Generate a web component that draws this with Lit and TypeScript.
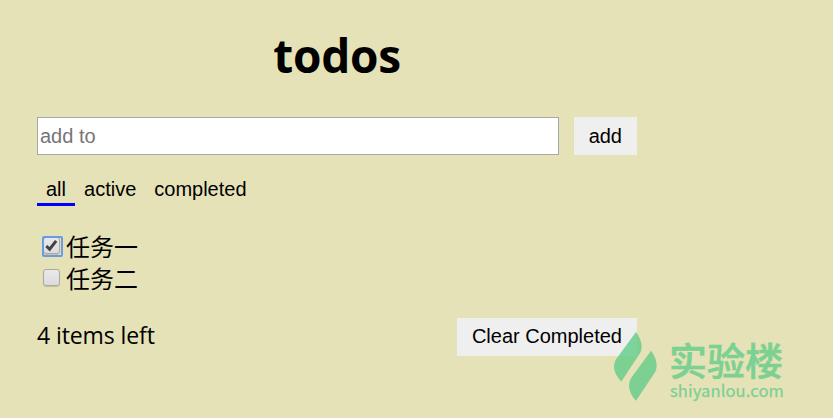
import { LitElement, html, css } from "lit";
import { customElement, state } from "lit/decorators.js";
import { classMap } from "lit/directives/class-map.js";

@customElement("site-mark")
class SiteMark extends LitElement {
  static styles = css`
    :host { display: flex; width: 172px; height: 74px; color: #62cd89; opacity: 0.8; pointer-events: none; }
    .leaf { flex: none; width: 43px; height: 70px; fill: currentColor; }
    .words { display: flex; flex-direction: column; margin-left: 12px; padding-top: 7px; white-space: nowrap; }
    .name { font: 500 38px/40px "Noto Sans CJK SC", sans-serif; -webkit-text-stroke: 0.6px currentColor; }
    .url { font: 400 16.5px/20px "Noto Sans CJK SC", sans-serif; -webkit-text-stroke: 0.25px currentColor; letter-spacing: 0.13px; margin: 1px 0 0 1px; }
  `;
  render() {
    return html`
      <svg class="leaf" viewBox="0 0 43 70">
        <path d="M22 0C25 3.5 27.3 9 27.6 14C27.7 17 27.2 19.3 25.8 21.5L7.2 49.7C3.5 45.5 0 40 0 35C0 32 0.8 29 2.6 26.5Z" />
        <path d="M37 18.7C40 22.5 42.6 28 42.6 33.5C42.6 36.5 42 38.7 40.5 41L22 68.8C18.5 65 15 59.5 15 54C15 51 15.8 48 17.5 45.5Z" />
      </svg>
      <div class="words">
        <span class="name">实验楼</span>
        <span class="url">shiyanlou.com</span>
      </div>
    `;
  }
}

@customElement("app-root")
class AppRoot extends LitElement {
  static styles = css`
    * { box-sizing: border-box; }
    :host {
      display: block; position: relative; height: 418px; overflow: hidden;
      background: #e6e2b7; color: #000; font: 24px "Open Sans", "Noto Sans CJK SC", sans-serif;
    }
    .app { width: 600px; margin-left: 37px; padding-top: 23px; }
    h1 { margin: 0; font: 700 46px/64px "Open Sans", sans-serif; text-align: center; letter-spacing: -0.3px; }
    .entry { display: flex; justify-content: space-between; margin-top: 30px; }
    button, input { font: 20px "Liberation Sans", Arial, sans-serif; margin: 0; outline: none; color: #000; }
    .field { width: 522px; height: 38px; border: 1px solid #a9a9a9; padding: 1px 2px; background: #fff; }
    .field::placeholder { color: #757575; opacity: 1; }
    .action { height: 38px; border: 0; padding: 1px 15px; background: #efefef; }
    .tabs { display: flex; margin-top: 17px; }
    .tab { height: 34px; border: 0; border-bottom: 3px solid transparent; padding: 4px 9px 1px; background: none; }
    .tab.on { border-bottom-color: #0000ff; }
    .list { display: flex; flex-direction: column; margin: 24px 0 0; padding: 0; list-style: none; }
    .item { display: flex; height: 32px; padding-left: 6px; }
    .box {
      display: flex; flex: none; position: relative; width: 17px; height: 17px; margin: 7px 6px 0 0;
      border: 1px solid #a8a8a5; border-radius: 3px; background: linear-gradient(#e9e9e9, #dcdcdc);
      box-shadow: 0 1px 1px rgba(0, 0, 0, 0.14);
    }
    .box.focus::after {
      content: ""; box-sizing: border-box; position: absolute; left: -2px; top: -2px; width: 21px; height: 21px;
      border: 2px solid #699bea; border-radius: 2px;
    }
    .tick { width: 15px; height: 15px; fill: none; stroke: #424242; stroke-width: 3.2; }
    .label { font: 24px/32px "Noto Sans CJK SC", sans-serif; }
    .foot { display: flex; justify-content: space-between; height: 38px; margin-top: 24px; }
    .foot .action { padding: 0 15px 2px; }
    .count { font: 23px/35px "Open Sans", sans-serif; letter-spacing: -0.1px; }
    .mark { position: absolute; left: 614px; top: 332px; }
  `;

  @state() filter = "all";
  @state() items = [
    { title: "任务一", done: true },
    { title: "任务二", done: false },
  ];

  toggle(index: number) {
    this.items = this.items.map((t, i) => (i === index ? { ...t, done: !t.done } : t));
  }

  render() {
    return html`
      <main class="app">
        <h1>todos</h1>
        <div class="entry">
          <input class="field" placeholder="add to" />
          <button class="action">add</button>
        </div>
        <nav class="tabs">
          ${["all", "active", "completed"].map(
            (name) => html`<button class=${classMap({ tab: true, on: this.filter === name })}
              @click=${() => (this.filter = name)}>${name}</button>`
          )}
        </nav>
        <ul class="list">
          ${this.items.map(
            (item, i) => html`<li class="item" @click=${() => this.toggle(i)}>
              <span class=${classMap({ box: true, focus: item.done })} role="checkbox" aria-checked=${item.done}>
                ${item.done ? html`<svg class="tick" viewBox="0 0 16 16"><path d="M2.5 8.5L6 12L13 3" /></svg>` : ""}
              </span>
              <span class="label">${item.title}</span>
            </li>`
          )}
        </ul>
        <div class="foot">
          <span class="count">4 items left</span>
          <button class="action">Clear Completed</button>
        </div>
      </main>
      <site-mark class="mark"></site-mark>
    `;
  }
}
